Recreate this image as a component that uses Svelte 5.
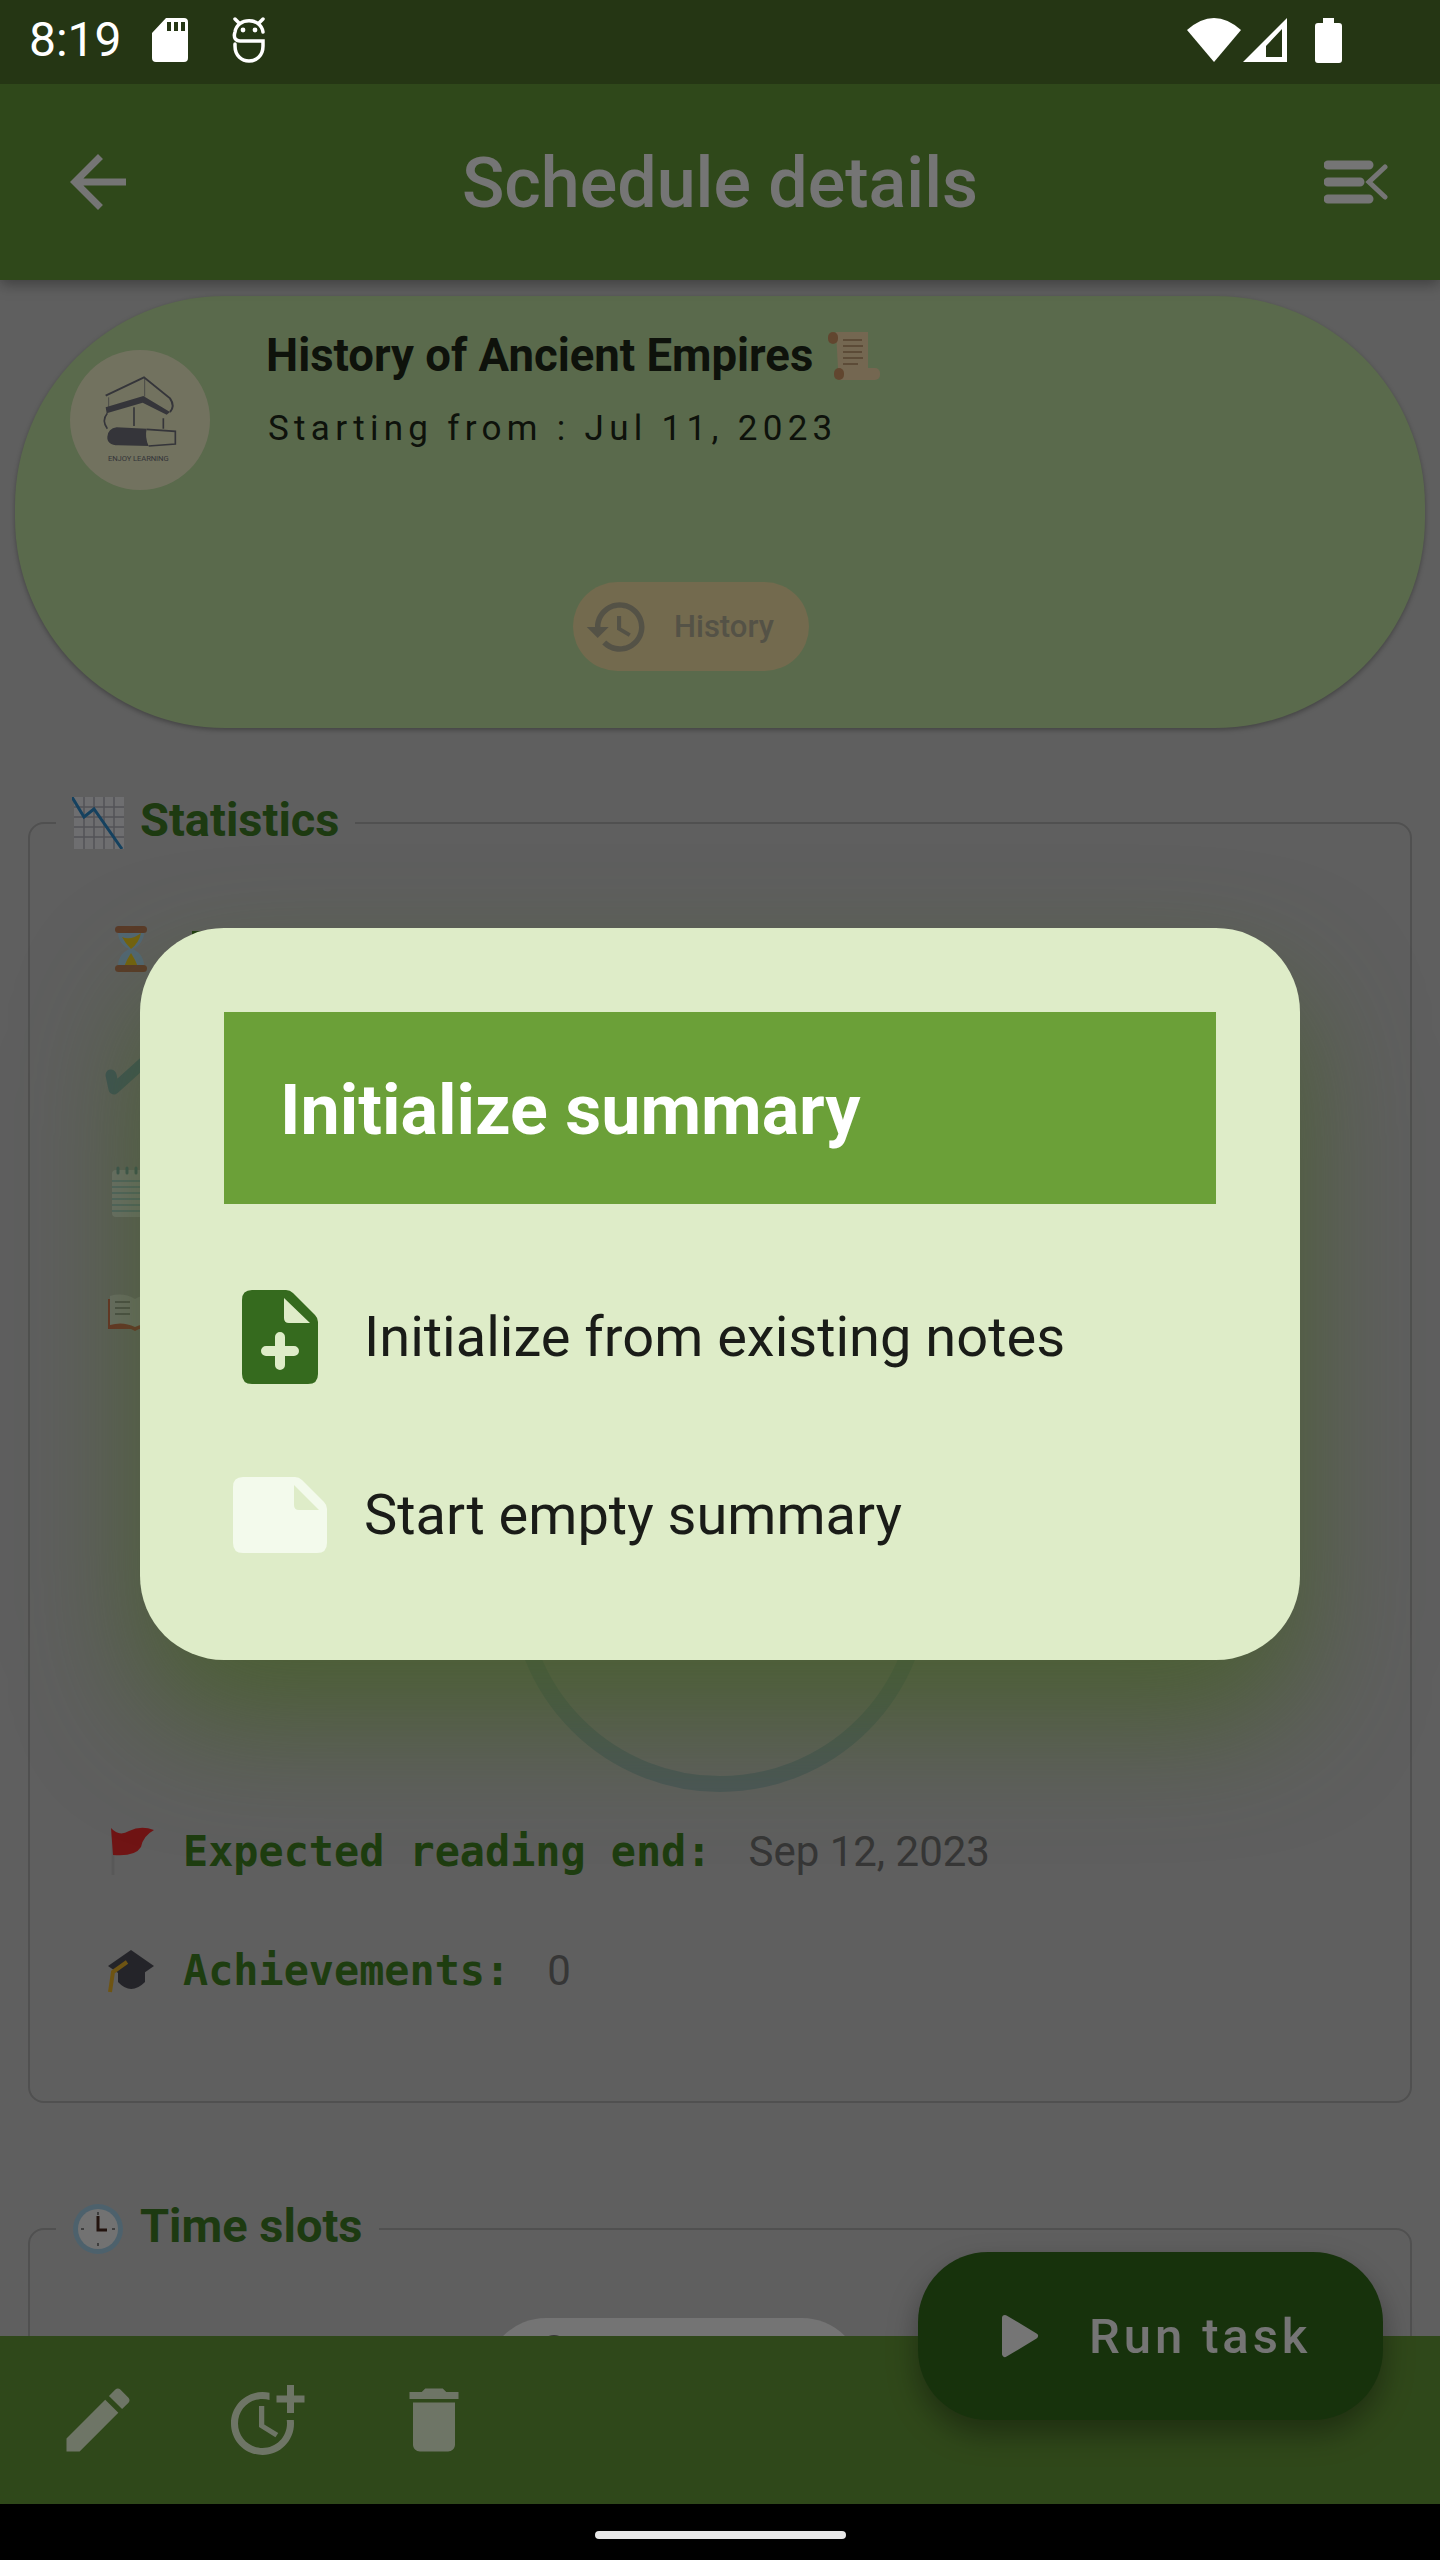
<script lang="ts">
  const options = [
    { label: "Initialize from existing notes", kind: "add" },
    { label: "Start empty summary", kind: "empty" },
  ];
</script>

<div class="screen">
  <div class="status">
    <div class="statusLeft">
      <span class="time">8:19</span>
      <svg class="sd" width="36" height="44" viewBox="0 0 36 44">
        <path fill-rule="evenodd" d="M14 0H32Q36 0 36 4V40Q36 44 32 44H4Q0 44 0 40V15ZM15 4V13H19V4ZM22 4V13H26V4ZM29 4V13H33V4Z" fill="#fff" />
      </svg>
      <svg class="bot" width="34" height="46" viewBox="0 0 34 46" fill="none" stroke="#fff" stroke-width="3.5" stroke-linecap="round">
        <path d="M31 15C29 0 5 0 3 15C1 21 4 24 8 24H31V29C31 49 3 49 3 29V27" />
        <path d="M3 2L7 6M31 2L27 6" />
        <circle cx="11" cy="13" r="2.4" fill="#fff" stroke="none" />
        <circle cx="23" cy="13" r="2.4" fill="#fff" stroke="none" />
      </svg>
    </div>
    <div class="statusRight">
      <svg width="54" height="44" viewBox="0 0 54 44"><path d="M27 44L0 12Q27 -12 54 12Z" fill="#fff" /></svg>
      <svg width="44" height="44" viewBox="0 0 44 44"><path fill-rule="evenodd" d="M44 0V44H0ZM39 11L23 28V39H39Z" fill="#fff" /></svg>
      <svg class="batt" width="27" height="45" viewBox="0 0 27 45"><path d="M8 0H19V5H24Q27 5 27 8V42Q27 45 24 45H3Q0 45 0 42V8Q0 5 3 5H8Z" fill="#fff" /></svg>
    </div>
  </div>

  <header class="topbar">
    <svg class="backIcon" width="84" height="84" viewBox="0 0 24 24"><path d="M20 11H7.83l5.59-5.59L12 4l-8 8 8 8 1.41-1.41L7.83 13H20v-2z" fill="#fff" /></svg>
    <h1>Schedule details</h1>
    <svg class="menuIcon" width="64" height="44" viewBox="0 0 64 44" fill="none" stroke="#fff" stroke-linecap="round">
      <path d="M4 5H45M4 22H36M4 39H45" stroke-width="9" />
      <path d="M61 7L45 22L61 37" stroke-width="5" />
    </svg>
  </header>

  <main>
    <section class="card">
      <div class="cardTop">
        <div class="avatar">
          <svg width="140" height="140" viewBox="60 60 420 420">
            <path d="M167 197L282 142L360 205Q376 228 360 246" fill="none" stroke="#74757e" stroke-width="6" />
            <path d="M167 232L280 198L360 246L350 254L278 218L170 250Z" fill="#74757e" />
            <path d="M176 202V232M284 145V200" stroke="#74757e" stroke-width="2" />
            <path d="M172 250Q154 272 172 296M252 232V288M340 265V296" fill="none" stroke="#74757e" stroke-width="5" />
            <path d="M200 292L290 296Q284 322 296 348L205 346Q170 344 172 320Q174 296 200 292Z" fill="#74757e" />
            <path d="M290 298L376 304V342L296 348" fill="none" stroke="#74757e" stroke-width="5" />
            <text x="265" y="394" text-anchor="middle" font-family="Roboto, sans-serif" font-size="23" textLength="182" fill="#74757e">ENJOY LEARNING</text>
          </svg>
        </div>
        <div class="cardText">
          <div class="cardTitle">
            <span>History of Ancient Empires</span>
            <svg width="52" height="50" viewBox="0 0 52 50">
              <path d="M8 2H40V38H10Z" fill="#fce0b0" />
              <rect x="0" y="2" width="10" height="12" rx="5" fill="#d49a68" />
              <rect x="8" y="38" width="44" height="12" rx="5" fill="#fce0b0" />
              <rect x="6" y="38" width="10" height="12" rx="5" fill="#d49a68" />
              <path d="M15 10H34M15 16H35M15 22H34M15 28H35M15 34H30" stroke="#c8a478" stroke-width="2" />
            </svg>
          </div>
          <div class="cardSub">Starting from : Jul 11, 2023</div>
        </div>
      </div>
      <div class="historyChip">
        <svg width="66" height="66" viewBox="0 0 24 24"><path d="M13 3c-4.97 0-9 4.03-9 9H1l3.89 3.89.07.14L9 12H6c0-3.87 3.13-7 7-7s7 3.13 7 7-3.13 7-7 7c-1.93 0-3.68-.79-4.94-2.06l-1.42 1.42C8.27 19.99 10.51 21 13 21c4.97 0 9-4.03 9-9s-4.03-9-9-9zm-1 5v5l4.28 2.54.72-1.21-3.5-2.08V8H12z" fill="#b8b29a" /></svg>
        <span>History</span>
      </div>
    </section>

    <fieldset class="box stats">
      <legend>
        <svg width="52" height="52" viewBox="0 0 52 52">
          <rect x="2" y="0" width="50" height="52" fill="#f0f0f4" />
          <path d="M12 0V52M22 0V52M32 0V52M42 0V52M2 10H52M2 20H52M2 30H52M2 40H52" stroke="#b4b4bc" stroke-width="1.5" />
          <path d="M0 0L12 20L22 12L50 52" fill="none" stroke="#2e8fd0" stroke-width="3" />
        </svg>
        <span>Statistics</span>
      </legend>

      <div class="row">
        <svg class="em" width="60" height="60" viewBox="0 0 60 60">
          <path d="M13 10H39Q40 24 28 30Q40 36 39 50H13Q12 36 24 30Q12 24 13 10Z" fill="#b4e0ff" />
          <path d="M17 18Q26 22 36 14Q34 24 26 30Q20 24 17 18ZM19 48Q22 40 26 34Q30 40 33 48Z" fill="#ffd820" />
          <rect x="10" y="7" width="32" height="7" rx="3.5" fill="#c47e57" />
          <rect x="10" y="46" width="32" height="7" rx="3.5" fill="#c47e57" />
        </svg>
        <span class="peek"></span>
      </div>
      <div class="row">
        <svg class="em" width="60" height="60" viewBox="0 0 60 60"><path d="M6 36L9 50L60 4" fill="none" stroke="#85b3bd" stroke-width="11" stroke-linejoin="round" stroke-linecap="round" /></svg>
      </div>
      <div class="row">
        <svg class="em" width="60" height="60" viewBox="0 0 60 60">
          <rect x="7" y="11" width="48" height="47" rx="4" fill="#f4f8f8" />
          <path d="M7 22H55M7 28H55M7 34H55M7 40H55M7 46H55M7 52H55" stroke="#b4dce8" stroke-width="2" />
          <path d="M13 14V9M22 14V9M31 14V9" stroke="#7fb4bc" stroke-width="3" stroke-linecap="round" />
        </svg>
      </div>
      <div class="row">
        <svg class="em" width="60" height="60" viewBox="0 0 60 60">
          <path d="M3 20H60V50H34L30 52L26 50H3Z" fill="#e8604c" />
          <path d="M5 17Q18 13 30 20V48Q18 42 5 46ZM30 20Q42 13 60 17V46Q42 42 30 48Z" fill="#f0f2ee" />
          <path d="M10 23H25M10 29H25M10 35H25M36 23H55M36 29H55M36 35H55" stroke="#8a8f8c" stroke-width="1.6" />
        </svg>
      </div>

      <div class="ringWrap">
        <svg width="420" height="420" viewBox="0 0 420 420"><circle cx="210" cy="210" r="202" fill="none" stroke="#a4bcc0" stroke-width="16" /></svg>
      </div>

      <div class="row first">
        <svg class="em" width="60" height="60" viewBox="0 0 60 60">
          <path d="M8 10V54" stroke="#c0c0c0" stroke-width="3" />
          <path d="M6 7Q14 16 24 10Q36 4 49 9Q38 15 36 26Q30 36 8 34Z" fill="#f52c2c" />
        </svg>
        <span class="label">Expected reading end:</span>
        <span class="value">Sep 12, 2023</span>
      </div>
      <div class="row ach">
        <svg class="em" width="60" height="60" viewBox="0 0 60 60">
          <path d="M13 30V42Q26 56 40 42V30Z" fill="#50505a" />
          <path d="M26 10L49 26L26 42L3 26Z" fill="#50505a" />
          <path d="M5 52L8 32L22 22" fill="none" stroke="#f0b82a" stroke-width="4" />
        </svg>
        <span class="label">Achievements:</span>
        <span class="value">0</span>
      </div>
    </fieldset>

    <fieldset class="box slots">
      <legend>
        <svg width="52" height="52" viewBox="0 0 52 52">
          <circle cx="26" cy="26" r="25" fill="#a8d4ec" />
          <circle cx="26" cy="26" r="20" fill="#f8f8f8" />
          <path d="M26 9V12M26 40V43M9 26H12M40 26H43" stroke="#8a8a8a" stroke-width="2" />
          <path d="M26 13V27H35" fill="none" stroke="#4a2a20" stroke-width="3" />
        </svg>
        <span>Time slots</span>
      </legend>
      <div class="slotChip"><span class="slotDot"></span></div>
    </fieldset>
  </main>

  <footer class="bottombar">
    <svg width="84" height="84" viewBox="0 0 24 24"><path d="M3 17.25V21h3.75L17.81 9.94l-3.75-3.75L3 17.25zM20.71 7.04c.39-.39.39-1.02 0-1.41l-2.34-2.34c-.39-.39-1.02-.39-1.41 0l-1.83 1.83 3.75 3.75 1.83-1.83z" /></svg>
    <svg width="84" height="84" viewBox="0 0 24 24"><path d="M10 8v6l4.7 2.9.8-1.2-4-2.4V8z" /><path d="M17.92 12c.05.33.08.66.08 1 0 3.9-3.1 7-7 7s-7-3.1-7-7 3.1-7 7-7c.7 0 1.37.1 2 .29V4.23C12.36 4.08 11.69 4 11 4c-5 0-9 4-9 9s4 9 9 9 9-4 9-9c0-.34-.02-.67-.06-1h-2.02z" /><path d="M20 5V2h-2v3h-3v2h3v3h2V7h3V5z" /></svg>
    <svg width="84" height="84" viewBox="0 0 24 24"><path d="M6 19c0 1.1.9 2 2 2h8c1.1 0 2-.9 2-2V7H6v12zM19 4h-3.5l-1-1h-5l-1 1H5v2h14V4z" /></svg>
  </footer>

  <button class="fab" type="button">
    <svg width="38" height="44" viewBox="0 0 38 44"><path d="M4 4L34 22L4 40Z" fill="#fff" stroke="#fff" stroke-width="6" stroke-linejoin="round" /></svg>
    <span>Run task</span>
  </button>

  <div class="scrim">
    <div class="dialog">
      <div class="dialogHead">Initialize summary</div>
      <div class="options">
        {#each options as opt}
          <div class="option">
            <div class="optIcon">
              {#if opt.kind === "add"}
                <svg width="76" height="94" viewBox="0 0 76 94">
                  <path fill-rule="evenodd" d="M10 0H44Q48 0 51 3L73 25Q76 28 76 32V84Q76 94 66 94H10Q0 94 0 84V10Q0 0 10 0ZM42 8V28Q42 33 47 33H68Z" fill="#356a1e" />
                  <path d="M38 47V75M24 61H52" stroke="#deecc8" stroke-width="10" stroke-linecap="round" />
                </svg>
              {:else}
                <svg width="94" height="76" viewBox="0 0 94 76">
                  <path fill-rule="evenodd" d="M10 0H62Q66 0 69 3L91 25Q94 28 94 32V66Q94 76 84 76H10Q0 76 0 66V10Q0 0 10 0ZM61 8V28Q61 33 66 33H86Z" fill="#f3faec" />
                </svg>
              {/if}
            </div>
            <span>{opt.label}</span>
          </div>
        {/each}
      </div>
    </div>
  </div>

  <div class="navbar"><div class="pill"></div></div>
</div>

<style>
  :global(body) {
    margin: 0;
    background: #000;
  }

  .screen {
    position: relative;
    width: 1440px;
    height: 2560px;
    display: flex;
    flex-direction: column;
    overflow: hidden;
    background: #cfcfcf;
    font-family: Roboto, sans-serif;
  }

  .status {
    position: relative;
    z-index: 3;
    height: 84px;
    flex: none;
    display: flex;
    justify-content: space-between;
    align-items: center;
    padding: 0 98px 4px 29px;
    box-sizing: border-box;
    background: #253614;
    color: #fff;
  }

  .statusLeft,
  .statusRight {
    display: flex;
    align-items: center;
  }

  .time {
    font-size: 48px;
    line-height: 1;
    width: 123px;
  }

  .bot {
    margin-left: 44px;
  }

  .statusRight svg + svg {
    margin-left: 2px;
  }

  .statusRight .batt {
    margin-left: 28px;
  }

  .topbar {
    position: relative;
    z-index: 1;
    height: 196px;
    flex: none;
    display: grid;
    grid-template-columns: 1fr auto 1fr;
    align-items: center;
    padding: 0 52px;
    box-sizing: border-box;
    background: #689d39;
    box-shadow: 0 4px 14px rgba(0, 0, 0, 0.35);
    color: #fff;
  }

  .backIcon {
    margin-left: 4px;
  }

  .topbar h1 {
    margin: 2px 0 0;
    font-size: 70px;
    font-weight: 500;
    line-height: 1;
  }

  .menuIcon {
    justify-self: end;
  }

  main {
    flex: 1;
    min-height: 0;
    overflow: hidden;
  }

  .card {
    margin: 16px 15px 0;
    height: 432px;
    box-sizing: border-box;
    padding: 29px 0 0 55px;
    border-radius: 210px;
    background: #c4e6a5;
    box-shadow: 0 2px 5px rgba(0, 0, 0, 0.3);
    display: flex;
    flex-direction: column;
    align-items: flex-start;
  }

  .cardTop {
    display: flex;
    gap: 56px;
  }

  .avatar {
    width: 140px;
    height: 140px;
    margin-top: 25px;
    border-radius: 50%;
    background: #f8f8cf;
    overflow: hidden;
  }

  .cardTitle {
    display: flex;
    align-items: center;
    gap: 15px;
    height: 60px;
    font-size: 45.5px;
    font-weight: 700;
    color: #20281a;
  }

  .cardSub {
    margin: 21px 0 0 2px;
    font-size: 35px;
    line-height: 46px;
    letter-spacing: 5.3px;
    color: #20281a;
  }

  .historyChip {
    margin: 92px 0 0 503px;
    height: 89px;
    width: 236px;
    box-sizing: border-box;
    padding-left: 11px;
    border-radius: 45px;
    background: #fae6aa;
    display: flex;
    align-items: center;
    gap: 24px;
    font-size: 31px;
    font-weight: 500;
    color: #b8b29a;
  }

  .box {
    margin: 0 28px;
    padding: 0;
    min-width: 0;
    border: 2px solid #aeaeae;
    border-radius: 16px;
  }

  .box legend {
    display: flex;
    align-items: center;
    gap: 16px;
    height: 60px;
    margin-left: 26px;
    padding: 0 16px;
    font-size: 47px;
    font-weight: 700;
    color: #417e27;
  }

  .box legend span {
    margin-top: -8px;
  }

  .stats {
    margin-top: 65px;
    padding: 66px 0 101px;
  }

  .row {
    display: flex;
    align-items: center;
    height: 60px;
    margin-top: 60px;
    padding-left: 75px;
  }

  .row:first-of-type {
    margin-top: 0;
  }

  .row.first {
    margin-top: 29px;
  }

  .row.ach {
    margin-top: 59px;
  }

  .em {
    flex: none;
    overflow: visible;
    margin-right: 18px;
  }

  .peek {
    width: 30px;
    height: 36px;
    margin-left: 9px;
    background: #438523;
  }

  .label {
    font-family: "DejaVu Sans Mono", "Liberation Mono", monospace;
    font-size: 41.8px;
    font-weight: 700;
    color: #438523;
  }

  .value {
    margin-left: 37px;
    font-size: 42px;
    color: #767676;
  }

  .ringWrap {
    display: flex;
    justify-content: center;
    margin-top: 33px;
  }

  .ringWrap svg {
    display: block;
  }

  .slots {
    margin-top: 96px;
    padding-top: 59px;
    height: 400px;
  }

  .slotChip {
    width: 376px;
    height: 120px;
    margin-left: 456px;
    border-radius: 60px;
    background: #fcfcfc;
    padding: 17px 0 0 54px;
    box-sizing: border-box;
  }

  .slotDot {
    display: block;
    width: 28px;
    height: 28px;
    border-radius: 50%;
    background: #777;
  }

  .bottombar {
    height: 168px;
    flex: none;
    display: flex;
    align-items: center;
    gap: 84px;
    padding-left: 56px;
    box-sizing: border-box;
    background: #689d39;
    fill: #f0ffdf;
    position: relative;
  }

  .fab {
    position: absolute;
    right: 57px;
    bottom: 140px;
    width: 465px;
    height: 168px;
    border: none;
    border-radius: 70px;
    background: #346d1c;
    color: #fff;
    display: flex;
    align-items: center;
    gap: 50px;
    padding: 0 0 0 83px;
    box-sizing: border-box;
    font-family: Roboto, sans-serif;
    font-size: 49px;
    font-weight: 500;
    letter-spacing: 3.9px;
    box-shadow: 0 14px 30px rgba(0, 0, 0, 0.35);
  }

  .scrim {
    position: absolute;
    inset: 84px 0 56px;
    z-index: 2;
    display: flex;
    align-items: center;
    justify-content: center;
    background: rgba(0, 0, 0, 0.54);
  }

  .dialog {
    width: 1160px;
    height: 732px;
    box-sizing: border-box;
    padding: 84px;
    border-radius: 84px;
    background: #deecc8;
    box-shadow: 0 60px 120px rgba(70, 95, 40, 0.8);
  }

  .dialogHead {
    height: 192px;
    display: flex;
    align-items: center;
    padding: 3px 0 0 56px;
    box-sizing: border-box;
    background: #6ba038;
    color: #fff;
    font-size: 70px;
    font-weight: 700;
  }

  .options {
    margin-top: 44px;
  }

  .option {
    display: flex;
    align-items: center;
    height: 178px;
    font-size: 56px;
    color: #1a1c18;
  }

  .optIcon {
    width: 140px;
    display: flex;
    justify-content: center;
    padding-right: 28px;
    box-sizing: border-box;
  }

  .optIcon svg {
    display: block;
  }

  .navbar {
    position: relative;
    z-index: 3;
    height: 56px;
    flex: none;
    background: #000;
    display: flex;
    justify-content: center;
    padding-top: 27px;
    box-sizing: border-box;
  }

  .pill {
    width: 251px;
    height: 8px;
    border-radius: 4px;
    background: #e8e8e8;
  }
</style>
